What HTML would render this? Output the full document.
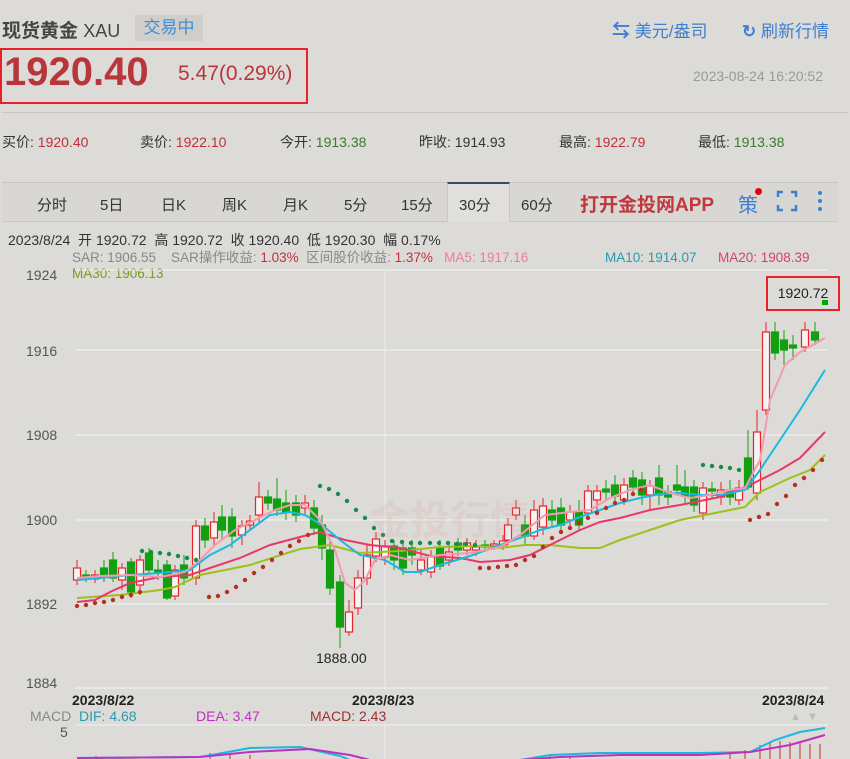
<!DOCTYPE html>
<html><head><meta charset="utf-8"><style>
body{margin:0;width:850px;height:759px;overflow:hidden;background:#dcdbd8;font-family:"Liberation Sans","Noto Sans CJK SC",sans-serif;position:relative;color:#333}
.a{position:absolute;white-space:nowrap}
.l{line-height:16px}
</style></head><body>
<div class="a" style="left:2px;top:16px;font-size:19px;font-weight:bold;color:#444">现货黄金 <span style="font-weight:normal;font-size:18px">XAU</span></div>
<div class="a" style="left:135px;top:15px;width:68px;height:26px;background:#cfcecb;color:#3f8dd6;font-size:17px;line-height:26px;text-align:center">交易中</div>
<div class="a" style="left:612px;top:17px;font-size:17px;color:#3f7fd0"><b style="font-size:18px">⇆</b> 美元/盎司</div>
<div class="a" style="left:742px;top:17px;font-size:17px;color:#3f7fd0"><b>↻</b> 刷新行情</div>
<div class="a" style="left:0;top:48px;width:304px;height:52px;border:2px solid #e8202a"></div>
<div class="a" style="left:4px;top:50px;font-size:40px;font-weight:bold;color:#b8353a;letter-spacing:0px">1920.40</div>
<div class="a" style="left:178px;top:62px;font-size:21px;color:#b8353a">5.47(0.29%)</div>
<div class="a" style="left:693px;top:68px;font-size:14px;color:#999">2023-08-24 16:20:52</div>
<div class="a" style="left:2px;top:112px;width:846px;height:1px;background:#c8c7c4"></div>
<div class="a" style="left:2px;top:132px;font-size:14px;color:#333;word-spacing:0">
<span style="position:absolute;left:0">买价: <span style="color:#c0303a">1920.40</span></span>
<span style="position:absolute;left:138px">卖价: <span style="color:#c0303a">1922.10</span></span>
<span style="position:absolute;left:278px">今开: <span style="color:#3a7a2a">1913.38</span></span>
<span style="position:absolute;left:417px">昨收: 1914.93</span>
<span style="position:absolute;left:557px">最高: <span style="color:#c0303a">1922.79</span></span>
<span style="position:absolute;left:696px">最低: <span style="color:#3a7a2a">1913.38</span></span></div>
<div class="a" style="left:2px;top:182px;width:836px;height:38px;border-top:1px solid #c8c7c4;border-bottom:1px solid #c8c7c4;background:#d8d7d4"></div>
<div class="a" style="left:447px;top:182px;width:61px;height:38px;background:#e0dfdc;border-top:2px solid #3a4a6a;border-left:1px solid #c8c7c4;border-right:1px solid #c8c7c4"></div>
<div class="a" style="top:194px;font-size:15px;color:#333;left:0">
<span style="position:absolute;left:37px">分时</span><span style="position:absolute;left:100px">5日</span><span style="position:absolute;left:161px">日K</span><span style="position:absolute;left:222px">周K</span><span style="position:absolute;left:283px">月K</span><span style="position:absolute;left:344px">5分</span><span style="position:absolute;left:401px">15分</span><span style="position:absolute;left:459px">30分</span><span style="position:absolute;left:521px">60分</span></div>
<div class="a" style="left:580px;top:190px;font-size:19px;font-weight:bold;color:#c0383e">打开金投网APP</div>
<div class="a" style="left:738px;top:189px;font-size:20px;color:#3f7fd0">策</div>
<div class="a" style="left:755px;top:188px;width:7px;height:7px;border-radius:50%;background:#e00"></div>
<svg class="a" style="left:776px;top:190px" width="22" height="22"><path d="M2 7V2h5M15 2h5v5M20 15v5h-5M7 20H2v-5" stroke="#3f7fd0" stroke-width="2.5" fill="none"/></svg>
<svg class="a" style="left:816px;top:189px" width="8" height="24"><circle cx="4" cy="4" r="2" fill="#3f7fd0"/><circle cx="4" cy="12" r="2" fill="#3f7fd0"/><circle cx="4" cy="20" r="2" fill="#3f7fd0"/></svg>
<div class="a l" style="left:8px;top:232px;font-size:14px;color:#333">2023/8/24 &nbsp;开 1920.72 &nbsp;高 1920.72 &nbsp;收 1920.40 &nbsp;低 1920.30 &nbsp;幅 0.17%</div>
<div class="a l" style="left:72px;top:250px;font-size:13.5px;color:#888">SAR: 1906.55 &nbsp;&nbsp; SAR操作收益: <span style="color:#c0303a">1.03%</span> &nbsp;区间股价收益: <span style="color:#c0303a">1.37%</span> &nbsp;&nbsp;<span style="color:#f07aa0">MA5: 1917.16</span></div>
<div class="a l" style="left:605px;top:250px;font-size:13.5px;color:#2a9ab0">MA10: 1914.07</div>
<div class="a l" style="left:718px;top:250px;font-size:13.5px;color:#d84070">MA20: 1908.39</div>
<div class="a l" style="left:72px;top:266px;font-size:13.5px;color:#7a9a20">MA30: 1906.13</div>
<svg class="a" style="left:0;top:0" width="850" height="759" id="c"></svg>
<div class="a" style="left:26px;top:267px;font-size:14px;color:#555">1924</div>
<div class="a" style="left:26px;top:343px;font-size:14px;color:#555">1916</div>
<div class="a" style="left:26px;top:427px;font-size:14px;color:#555">1908</div>
<div class="a" style="left:26px;top:512px;font-size:14px;color:#555">1900</div>
<div class="a" style="left:26px;top:596px;font-size:14px;color:#555">1892</div>
<div class="a" style="left:26px;top:675px;font-size:14px;color:#555">1884</div>
<div class="a" style="left:316px;top:650px;font-size:14px;color:#222">1888.00</div>
<div class="a" style="left:766px;top:276px;width:70px;height:31px;border:2px solid #e8202a;background:#dcdbd8;font-size:14px;line-height:31px;text-align:center;color:#222">1920.72</div>
<div class="a" style="left:822px;top:300px;width:6px;height:5px;background:#0a0"></div>
<div class="a" style="left:72px;top:692px;font-size:14px;font-weight:bold;color:#222">2023/8/22</div>
<div class="a" style="left:352px;top:692px;font-size:14px;font-weight:bold;color:#222">2023/8/23</div>
<div class="a" style="left:762px;top:692px;font-size:14px;font-weight:bold;color:#222">2023/8/24</div>
<div class="a" style="left:30px;top:708px;font-size:14px;color:#888">MACD &nbsp;<span style="color:#2a9ab0">DIF: 4.68</span></div>
<div class="a" style="left:196px;top:708px;font-size:14px;color:#c030c0">DEA: 3.47</div>
<div class="a" style="left:310px;top:708px;font-size:14px;color:#a03030">MACD: 2.43</div>
<div class="a" style="left:60px;top:724px;font-size:14px;color:#555">5</div>
<div class="a" style="left:790px;top:711px;font-size:11px;color:#bbb">▲ &nbsp;▼</div>
<div class="a" style="left:370px;top:488px;font-size:40px;font-weight:bold;color:rgba(220,150,140,0.15)">金投行情</div>
<script>
var s='';
s+='<line x1="75" y1="270" x2="828" y2="270" stroke="#f4f4f4"/>';
[350,435,520,604,688].forEach(y=>s+='<line x1="75" y1="'+y+'" x2="828" y2="'+y+'" stroke="#f0f0f0" stroke-width="1.2"/>');
s+='<line x1="385" y1="270" x2="385" y2="688" stroke="#eee"/><line x1="385" y1="725" x2="385" y2="759" stroke="#eee"/>';
s+='<line x1="75" y1="725" x2="828" y2="725" stroke="#f0f0f0"/>';
var c=[[77,580,568,560,585],[86,575,577,570,582],[95,579,575,570,583],[104,568,577,560,582],[113,560,578,552,582],[122,580,568,563,590],[131,562,592,558,598],[140,585,560,555,595],[149,553,570,548,575],[158,570,572,560,580],[167,565,598,560,600],[175,596,570,565,600],[184,565,578,555,585],[196,578,526,520,585],[205,526,540,518,548],[214,538,522,512,545],[222,517,530,505,540],[232,517,536,508,548],[242,535,526,520,545],[250,525,521,515,530],[259,515,497,482,522],[268,497,503,490,510],[277,499,510,478,516],[286,503,512,490,520],[296,503,515,495,522],[305,508,503,495,515],[314,508,528,500,535],[322,525,548,515,560],[330,550,588,540,595],[340,582,627,575,648],[349,632,612,600,636],[358,608,578,570,615],[367,578,555,545,585],[376,556,539,532,562],[385,557,546,540,565],[394,546,560,540,570],[403,548,568,540,575],[412,548,555,540,565],[421,570,560,550,575],[431,572,557,550,578],[440,547,566,540,570],[449,560,552,545,566],[458,543,550,538,556],[467,550,543,538,555],[476,550,547,540,556],[485,545,547,540,550],[494,546,544,540,550],[503,545,541,535,550],[508,540,525,518,545],[516,515,508,500,520],[525,525,536,515,545],[534,536,510,500,540],[543,527,506,498,535],[552,510,520,500,528],[561,508,525,498,530],[570,520,512,505,528],[579,512,525,500,530],[588,513,491,485,518],[597,500,491,485,510],[606,489,492,480,500],[615,485,496,475,505],[624,500,485,478,505],[633,478,487,470,495],[642,480,495,472,505],[650,495,486,480,510],[659,478,495,465,505],[668,492,497,485,505],[677,485,490,465,495],[685,487,496,470,505],[694,487,505,480,512],[703,513,488,482,520],[712,489,490,482,498],[721,497,490,482,505],[730,490,497,480,505],[739,500,488,480,505],[748,458,487,430,490],[757,493,432,410,500],[766,410,332,322,415],[775,332,353,322,360],[784,340,350,330,365],[793,345,348,335,360],[805,347,330,322,352],[815,332,340,322,345]];
c.forEach(d=>{var up=d[2]<d[1],col=up?'#e8262a':'#12a012',t=Math.min(d[1],d[2]),h=Math.max(2,Math.abs(d[1]-d[2]));
s+='<line x1="'+d[0]+'" y1="'+d[3]+'" x2="'+d[0]+'" y2="'+d[4]+'" stroke="'+col+'"/>';
s+='<rect x="'+(d[0]-3.5)+'" y="'+t+'" width="7" height="'+h+'" fill="'+(up?'#f4f4f4':col)+'" stroke="'+col+'" stroke-width="1.2"/>';});
function pl(p,col){s+='<polyline points="'+p+'" fill="none" stroke="'+col+'" stroke-width="2"/>';}
pl('77,598 120,595 160,590 175,587 200,575 250,565 300,549 330,545 360,553 400,551 440,547 480,546 500,548 525,545 550,545 580,548 600,548 620,540 650,530 680,520 720,512 745,507 760,492 790,478 810,470 825,455','#9cc01c');
pl('77,602 95,600 110,592 130,583 160,577 190,575 210,568 240,558 270,545 300,537 320,532 345,540 370,545 400,548 430,556 460,558 480,562 510,560 530,555 550,545 580,530 600,522 620,518 650,510 680,505 720,497 750,485 780,470 800,458 825,432','#e8386a');
pl('77,580 100,578 130,575 160,573 190,570 210,555 230,545 250,530 270,515 290,512 305,515 322,525 340,540 360,555 385,560 405,572 420,572 440,565 470,556 500,545 520,538 540,530 560,525 580,517 600,510 620,503 640,498 660,494 680,493 700,495 720,495 745,490 760,470 780,440 800,410 825,370','#1cb8e0');
pl('77,578 100,576 130,575 160,577 185,572 200,560 215,545 235,530 255,520 275,510 290,505 305,505 320,520 335,550 345,583 355,590 365,580 375,560 390,555 410,560 440,555 470,553 500,547 520,535 545,515 570,512 590,510 610,498 630,490 650,485 670,493 690,498 710,495 730,490 745,488 760,460 770,400 785,365 800,352 825,338','#f49ab0');
var g=[[142,551],[151,552],[160,553],[169,554],[178,556],[187,558],[196,560],[320,486],[329,489],[338,494],[347,501],[356,510],[365,518],[374,528],[383,535],[392,541],[402,542],[411,543],[420,543],[430,543],[439,543],[448,543],[457,544],[466,544],[475,545],[703,465],[712,466],[721,467],[730,468],[739,470]];
g.forEach(p=>s+='<circle cx="'+p[0]+'" cy="'+p[1]+'" r="2.2" fill="#1a8a4a"/>');
var r=[[77,606],[86,605],[95,603],[104,602],[113,600],[122,597],[131,595],[140,592],[209,597],[218,596],[227,592],[236,587],[245,580],[254,573],[263,567],[272,560],[281,553],[290,546],[299,541],[308,535],[480,568],[489,568],[498,567],[507,566],[516,565],[525,560],[534,556],[543,547],[552,538],[561,532],[570,528],[579,523],[588,518],[597,513],[606,508],[615,503],[624,500],[633,494],[641,490],[750,520],[759,517],[768,514],[777,504],[786,496],[795,485],[804,478],[813,470],[822,460]];
r.forEach(p=>s+='<circle cx="'+p[0]+'" cy="'+p[1]+'" r="2.2" fill="#b83020"/>');
[[96,756],[122,758],[210,753],[230,754],[250,755],[550,755],[570,756],[730,754],[745,750],[760,745],[770,742],[780,741],[790,742],[800,743],[810,744],[820,744]].forEach(p=>s+='<line x1="'+p[0]+'" y1="'+p[1]+'" x2="'+p[0]+'" y2="759" stroke="#c03020"/>');
s+='<polyline points="77,758 200,757 250,748 300,747 340,756 350,760" fill="none" stroke="#1cb8e0" stroke-width="2"/>';
s+='<polyline points="77,758 200,757 250,752 310,749 350,755 370,760" fill="none" stroke="#c030c0" stroke-width="2"/>';
s+='<polyline points="520,760 550,755 600,753 700,753 750,752 775,740 800,732 825,728" fill="none" stroke="#1cb8e0" stroke-width="2"/>';
s+='<polyline points="520,760 560,757 620,755 700,755 750,752 790,745 825,735" fill="none" stroke="#c030c0" stroke-width="2"/>';
document.getElementById('c').innerHTML=s;
</script>
</body></html>
